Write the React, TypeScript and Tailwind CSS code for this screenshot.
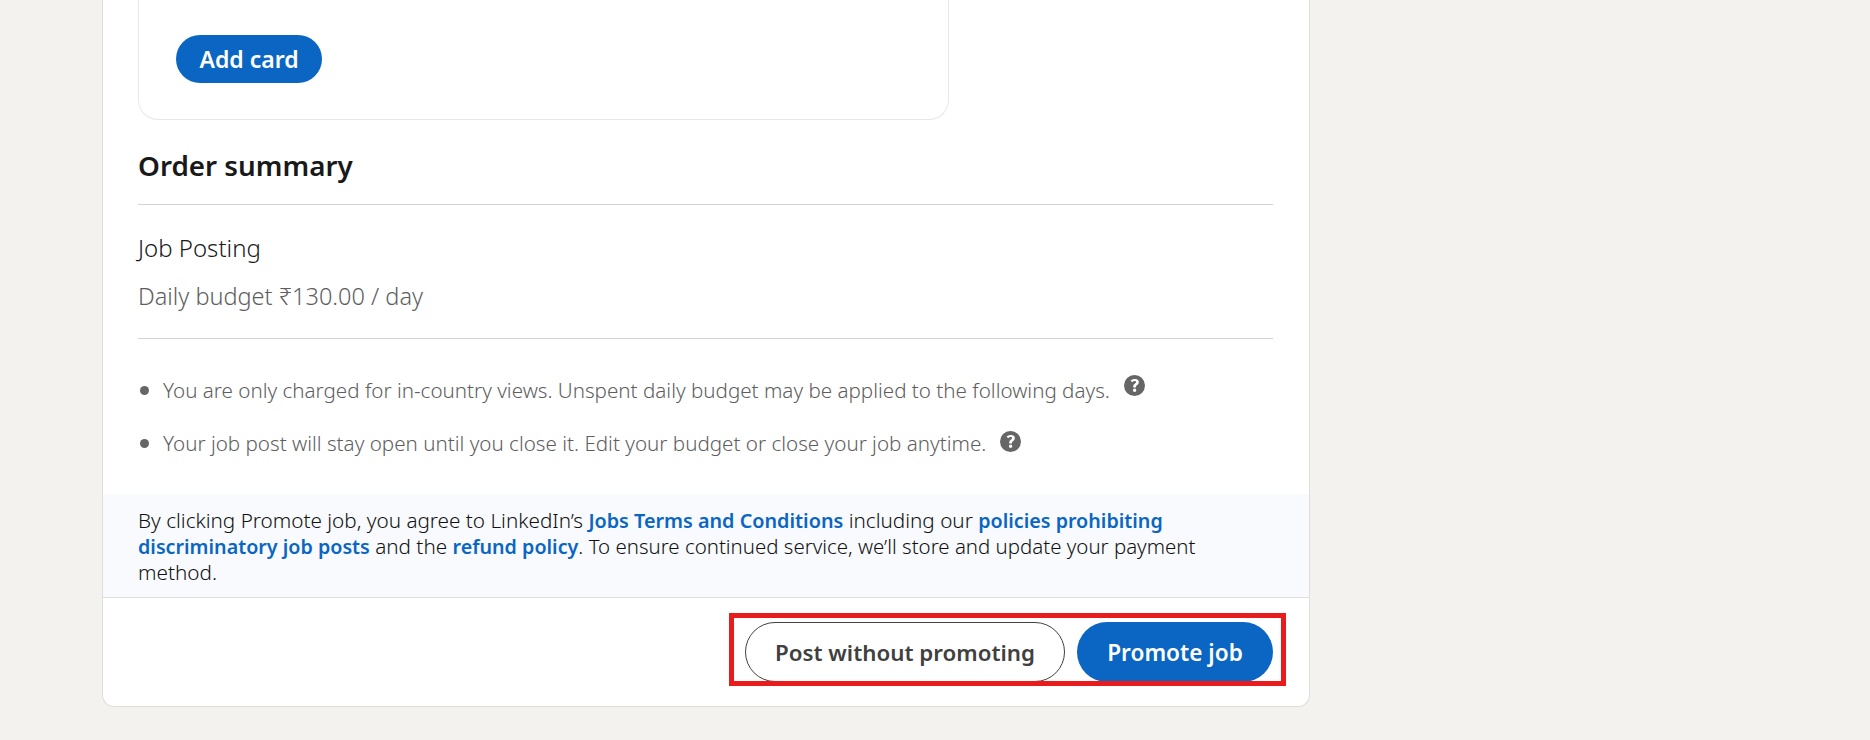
import React from 'react';

const HelpIcon: React.FC = () => (
  <svg viewBox="0 0 16 16" className="w-[21px] h-[21px] inline-block shrink-0 text-[#666666]" fill="currentColor" aria-hidden="true">
    <path fillRule="evenodd" d="M8 0a8 8 0 100 16A8 8 0 008 0zm.1 12.9a1.3 1.3 0 110-2.6 1.3 1.3 0 010 2.6zm2-5.2c-.7.5-1 .8-1 1.5v.3H7V9c0-1.2.4-1.8 1.2-2.4.6-.4 1-.7 1-1.2 0-.5-.4-.8-1.1-.8-.7 0-1.3.3-1.9.9L5 4.2C5.8 3.4 6.9 3 8.3 3c1.8 0 3 1 3 2.3 0 1.1-.5 1.7-1.2 2.4z" />
  </svg>
);

const App: React.FC = () => {
  return (
    <div className="min-h-[740px] w-full overflow-hidden bg-[#f4f2ee] pl-[102px] font-['Noto_Sans',sans-serif]">
      <div className="relative w-[1208px] h-[707px] flex flex-col bg-white border-x border-b border-[#dfdeda] rounded-b-[12px]">
        <div className="pl-[35px] pr-[36px]">
          <div className="w-[811px] h-[120px] border-x border-b border-[#e8e8e8] rounded-b-[20px] pl-[37px] pt-[35px]">
            <button className="h-[48px] w-[146px] pt-[1px] rounded-full bg-[#0a66c2] text-white text-[23px] font-semibold">
              Add card
            </button>
          </div>
          <h2 className="mt-[26px] text-[27.8px] leading-[38px] font-semibold text-[#191919]">Order summary</h2>
          <div className="mt-[20px] border-t border-[#d4d4d4]" />
          <p className="mt-[27px] text-[24px] leading-[32px] font-light text-[#1a1a1a]">Job Posting</p>
          <p className="mt-[16px] text-[23.5px] leading-[32px] font-light text-[#5e5e5e]">Daily budget ₹130.00 / day</p>
          <div className="mt-[26px] border-t border-[#d4d4d4]" />
          <ul className="mt-[38px] flex flex-col gap-[27px] text-[20.6px] leading-[26px] font-light text-[#5e5e5e]">
            <li className="flex items-center">
              <span className="w-[9px] h-[9px] rounded-full bg-[#666666] ml-[2px] mr-[14px]" />
              You are only charged for in-country views. Unspent daily budget may be applied to the following days.
              <span className="ml-[14px] -mt-[9px] flex"><HelpIcon /></span>
            </li>
            <li className="flex items-center">
              <span className="w-[9px] h-[9px] rounded-full bg-[#666666] ml-[2px] mr-[14px]" />
              Your job post will stay open until you close it. Edit your budget or close your job anytime.
              <span className="ml-[14px] -mt-[4px] flex"><HelpIcon /></span>
            </li>
          </ul>
        </div>
        <div className="mt-[38px] h-[104px] bg-[#f8fafd] border-b border-[#e0e0e0] pl-[35px] pr-[60px] pt-[13px] text-[20.7px] leading-[26px] font-light text-[#111111]">
          By clicking Promote job, you agree to LinkedIn’s{' '}
          <a className="text-[19.8px] leading-none font-semibold text-[#0a66c2]">Jobs Terms and Conditions</a> including our{' '}
          <a className="text-[19.7px] leading-none font-semibold text-[#0a66c2]">policies prohibiting discriminatory job posts</a> and the{' '}
          <a className="text-[19.7px] leading-none font-semibold text-[#0a66c2]">refund policy</a>
          <span className="text-[20.45px] leading-none">. To ensure continued service, we’ll store and update your payment</span> method.
        </div>
        <div className="flex justify-end gap-[12px] pr-[36px] pt-[24px]">
          <button className="h-[60px] w-[320px] pt-[2px] rounded-full border border-[#404040] bg-white text-[#404040] text-[22.3px] font-semibold">
            Post without promoting
          </button>
          <button className="h-[60px] w-[196px] pt-[2px] rounded-full bg-[#0a66c2] text-white text-[22.6px] font-semibold">
            Promote job
          </button>
        </div>
        <div className="absolute left-[626px] top-[613px] w-[557px] h-[73px] border-[5px] border-[#e81c1c]" />
      </div>
    </div>
  );
};

export default App;
